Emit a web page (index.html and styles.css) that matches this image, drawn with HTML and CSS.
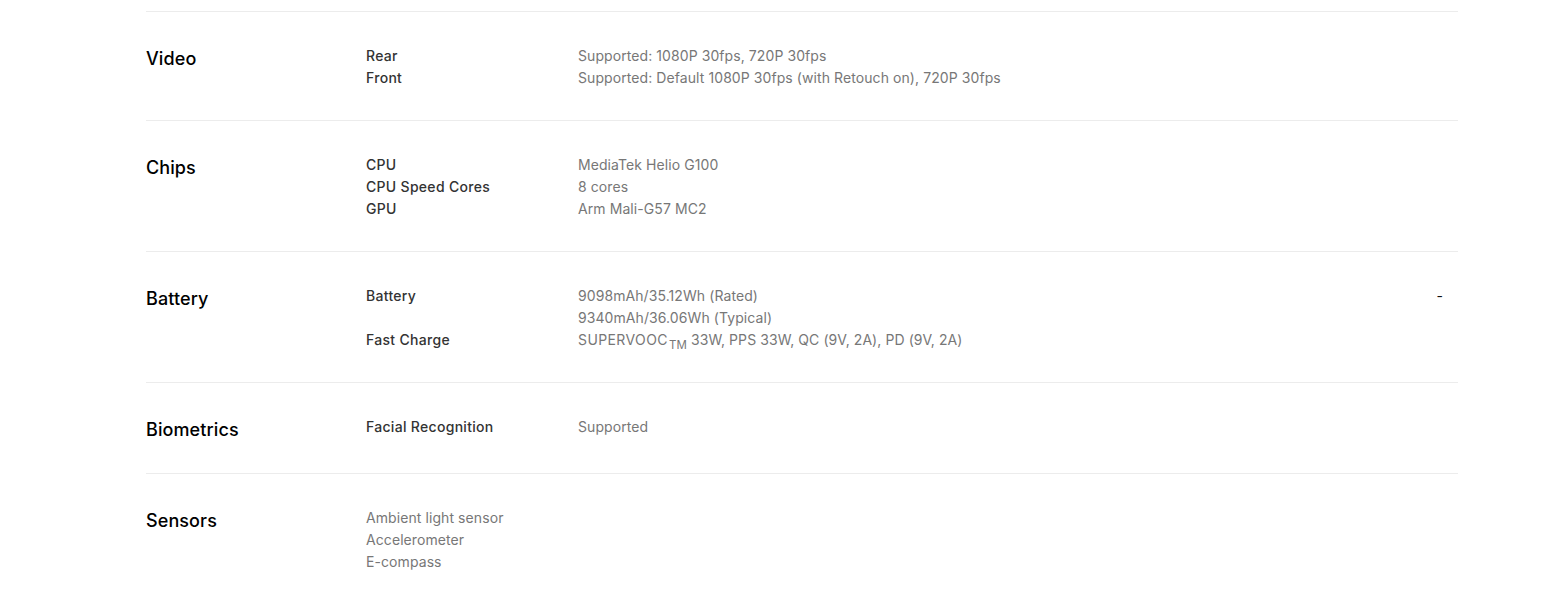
FILE: index.html
```html
<!DOCTYPE html>
<html lang="en">
<head>
    <meta charset="UTF-8">
    <meta name="viewport" content="width=device-width, initial-scale=1.0">
    <title>Specs</title>
    <link rel="stylesheet" href="styles.css">
</head>
<body>
    <div class="specs">
        <section class="spec">
            <h3>Video</h3>
            <dl class="rows">
                <dt>Rear</dt>
                <dd>Supported: 1080P 30fps, 720P 30fps</dd>
                <dt>Front</dt>
                <dd>Supported: Default 1080P 30fps (with Retouch on), 720P 30fps</dd>
            </dl>
        </section>

        <section class="spec">
            <h3>Chips</h3>
            <dl class="rows">
                <dt>CPU</dt>
                <dd>MediaTek Helio G100</dd>
                <dt>CPU Speed Cores</dt>
                <dd>8 cores</dd>
                <dt>GPU</dt>
                <dd>Arm Mali-G57 MC2</dd>
            </dl>
        </section>

        <section class="spec">
            <h3>Battery</h3>
            <dl class="rows">
                <dt>Battery</dt>
                <dd>9098mAh/35.12Wh (Rated)<br>9340mAh/36.06Wh (Typical)</dd>
                <dt>Fast Charge</dt>
                <dd><span class="brand">SUPERVOOC</span><sub>TM</sub> 33W, PPS 33W, QC (9V, 2A), PD (9V, 2A)</dd>
            </dl>
            <span class="note">-</span>
        </section>

        <section class="spec">
            <h3>Biometrics</h3>
            <dl class="rows">
                <dt>Facial Recognition</dt>
                <dd>Supported</dd>
            </dl>
        </section>

        <section class="spec">
            <h3>Sensors</h3>
            <ul class="plain">
                <li>Ambient light sensor</li>
                <li>Accelerometer</li>
                <li>E-compass</li>
            </ul>
        </section>
    </div>
</body>
</html>
```

FILE: styles.css
```css
body {
    font-family: 'Inter', 'Liberation Sans', sans-serif;
    margin: 0;
    padding: 0;
    background-color: #fff;
    color: #111;
}

.specs {
    width: 1312px;
    margin-left: 146px;
    padding-top: 11px;
}

.spec {
    display: grid;
    grid-template-columns: 220px 1fr auto;
    align-items: start;
    border-top: 1px solid #ececec;
    padding: 33px 0 31px;
}

.spec h3 {
    margin: 0;
    padding-top: 1px;
    font-size: 18px;
    font-weight: 500;
    line-height: 25px;
    letter-spacing: 0.1px;
    color: #000;
}

.rows {
    display: grid;
    grid-template-columns: 212px 1fr;
    margin: 0;
    font-size: 14px;
    line-height: 22px;
}

.rows dt {
    color: #333;
    font-weight: 500;
    letter-spacing: 0.3px;
}

.rows dd {
    margin: 0;
    color: #777;
    letter-spacing: 0.08px;
}

.rows .brand {
    letter-spacing: 0.4px;
}

.rows sub {
    font-size: 11.5px;
    line-height: 0;
    margin-left: 1px;
}

.plain {
    list-style: none;
    margin: 0;
    padding: 0;
    font-size: 14px;
    line-height: 22px;
    color: #777;
    letter-spacing: 0.08px;
}

.note {
    font-size: 14px;
    line-height: 22px;
    color: #111;
    margin-right: 15px;
}
```
